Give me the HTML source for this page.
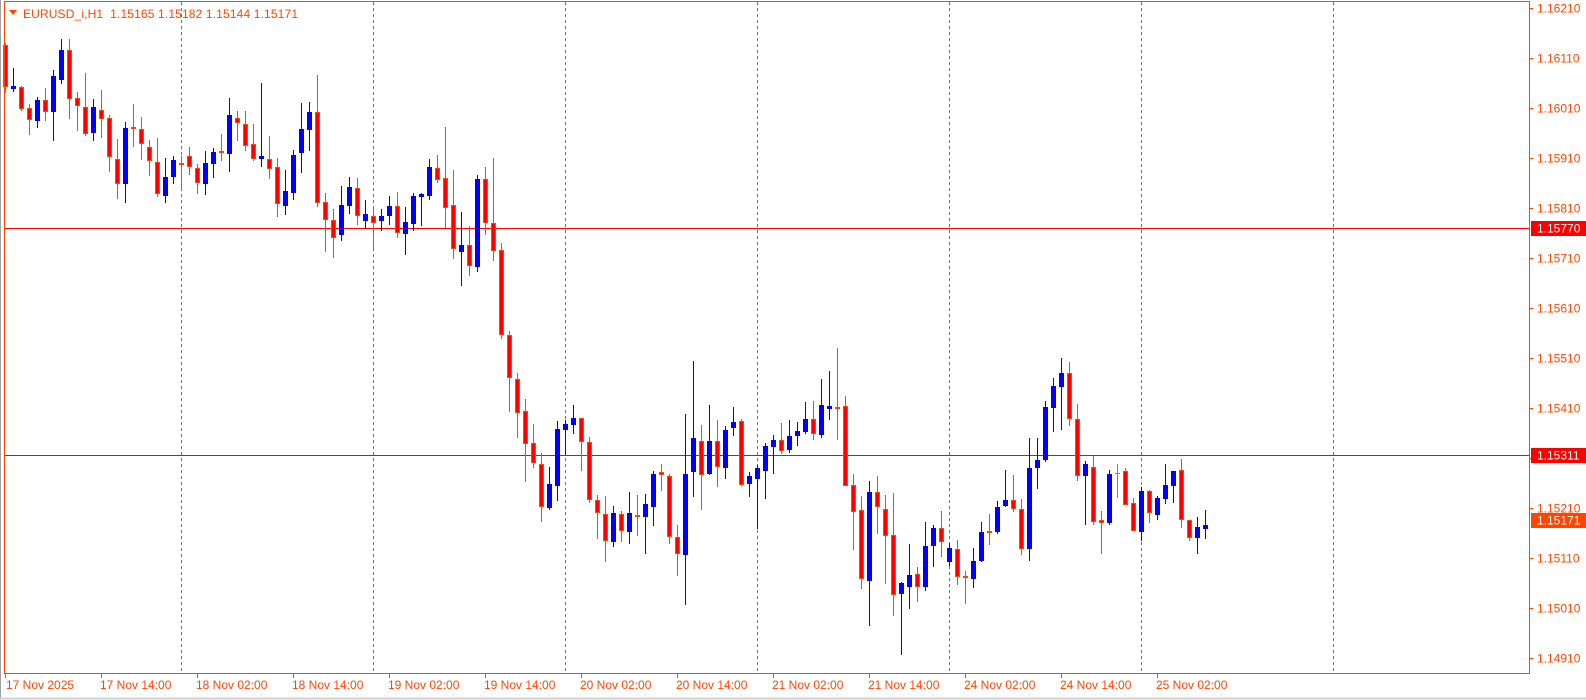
<!DOCTYPE html>
<html><head><meta charset="utf-8"><style>
html,body{margin:0;padding:0;background:#fff;width:1586px;height:700px;overflow:hidden}
svg{display:block;font-family:"Liberation Sans",sans-serif}
</style></head><body>
<svg id="c" width="1586" height="700" xmlns="http://www.w3.org/2000/svg">
<rect x="0" y="0" width="1586" height="700" fill="#fff"/>
<line x1="0.5" y1="0" x2="0.5" y2="700" stroke="#a0a0a0" stroke-width="1"/>
<line x1="0" y1="698.5" x2="1586" y2="698.5" stroke="#d0d0d0" stroke-width="2"/>
<g id="grid" stroke="#ff4500" stroke-width="1" stroke-dasharray="3,3">
<line x1="181.5" y1="2" x2="181.5" y2="673"/>
<line x1="373.5" y1="2" x2="373.5" y2="673"/>
<line x1="565.5" y1="2" x2="565.5" y2="673"/>
<line x1="757.5" y1="2" x2="757.5" y2="673"/>
<line x1="949.5" y1="2" x2="949.5" y2="673"/>
<line x1="1141.5" y1="2" x2="1141.5" y2="673"/>
<line x1="1333.5" y1="2" x2="1333.5" y2="673"/>
</g>
<line x1="5" y1="228.5" x2="1529" y2="228.5" stroke="#ff0000" stroke-width="1"/>
<line x1="5" y1="455.5" x2="1529" y2="455.5" stroke="#ff0000" stroke-width="1"/>
<g id="candles"></g>
<rect x="4.5" y="1.5" width="1525" height="672" fill="none" stroke="#ff4500" stroke-width="1"/>
<g id="ticks" stroke="#ff4500" stroke-width="1"></g>
<g fill="#ff4500" font-size="12">
<text x="1537" y="12.5">1.16210</text>
<text x="1537" y="62.5">1.16110</text>
<text x="1537" y="112.5">1.16010</text>
<text x="1537" y="162.5">1.15910</text>
<text x="1537" y="212.5">1.15810</text>
<text x="1537" y="262.5">1.15710</text>
<text x="1537" y="312.5">1.15610</text>
<text x="1537" y="362.5">1.15510</text>
<text x="1537" y="412.5">1.15410</text>
<text x="1537" y="512.5">1.15210</text>
<text x="1537" y="562.5">1.15110</text>
<text x="1537" y="612.5">1.15010</text>
<text x="1537" y="662.5">1.14910</text>
</g>
<rect x="1531" y="221" width="55" height="15" fill="#ff0000"/>
<text x="1537" y="232.5" fill="#fff" font-size="12">1.15770</text>
<rect x="1531" y="448" width="55" height="15" fill="#ff0000"/>
<text x="1537" y="459.5" fill="#fff" font-size="12">1.15311</text>
<rect x="1531" y="513" width="55" height="15" fill="#ff4500"/>
<text x="1537" y="524.5" fill="#fff" font-size="12">1.15171</text>
<g fill="#ff4500" font-size="12">
<text x="6" y="689">17 Nov 2025</text>
<text x="100" y="689">17 Nov 14:00</text>
<text x="196" y="689">18 Nov 02:00</text>
<text x="292" y="689">18 Nov 14:00</text>
<text x="388" y="689">19 Nov 02:00</text>
<text x="484" y="689">19 Nov 14:00</text>
<text x="580" y="689">20 Nov 02:00</text>
<text x="676" y="689">20 Nov 14:00</text>
<text x="772" y="689">21 Nov 02:00</text>
<text x="868" y="689">21 Nov 14:00</text>
<text x="964" y="689">24 Nov 02:00</text>
<text x="1060" y="689">24 Nov 14:00</text>
<text x="1156" y="689">25 Nov 02:00</text>
</g>
<polygon points="9,10 17,10 13,15" fill="#ff4500"/>
<text x="23" y="18" fill="#ff4500" font-size="12" textLength="275">EURUSD_i,H1 &#160;1.15165 1.15182 1.15144 1.15171</text>
</svg>
<script>
var D=[
['r',45,87,43,93],['b',86,89,68,92],['r',87,109,86,111],['r',108,120,104,135],['b',100,121,97,128],
['r',100,112,88,121],['b',76,112,70,141],['b',50,80,39,84],['r',50,99,39,119],['r',98,106,92,131],
['r',107,134,73,136],['b',107,133,99,141],['r',110,119,90,138],['r',118,157,115,172],['r',159,184,139,199],
['b',128,184,122,203],['r',127,129,104,147],['r',129,144,117,160],['r',147,161,140,176],['r',162,194,138,197],
['b',177,196,158,203],['b',160,177,156,184],['r',163,165,156,188],['r',156,167,147,175],['r',168,183,164,194],
['b',163,184,151,195],['b',152,164,148,178],['r',151,153,134,161],['b',115,154,98,172],['r',118,123,111,141],
['r',124,146,111,151],['r',144,159,124,161],['b',156,159,83,167],['r',159,169,136,179],['r',167,204,158,217],
['b',191,206,170,215],['b',155,193,150,200],['b',129,153,103,173],['b',112,130,102,151],['r',112,203,75,207],
['r',202,220,193,252],['r',220,238,209,258],['b',205,235,186,241],['b',187,206,177,214],['r',188,216,178,225],
['b',214,221,200,229],['r',216,223,206,248],['b',216,221,209,231],['b',206,216,196,225],['r',206,233,192,238],
['b',222,234,207,255],['b',196,224,193,231],['b',194,197,193,226],['b',167,196,159,200],['r',168,180,155,183],
['r',178,208,127,228],['r',205,249,170,259],['b',245,252,212,286],['r',245,266,226,276],['b',179,267,175,272],
['r',179,223,167,235],['r',223,251,158,261],['r',250,335,243,339],['r',335,378,331,412],['r',379,413,373,438],
['r',411,444,399,482],['r',443,463,424,468],['r',464,507,453,522],['b',484,508,467,510],['b',429,486,421,501],
['b',424,430,420,455],['b',418,425,405,434],['r',418,442,418,471],['r',442,500,437,503],['r',500,513,495,539],
['r',514,541,496,562],['b',513,542,506,547],['r',514,531,511,542],['b',513,532,492,544],['r',515,516,495,536],
['b',504,517,494,554],['b',474,507,471,526],['r',472,475,464,491],['r',476,537,474,544],['r',537,554,525,576],
['b',474,555,414,605],['b',438,472,361,497],['r',441,475,425,510],['b',441,474,405,475],['r',441,467,420,487],
['b',430,468,426,479],['b',422,428,407,436],['r',421,485,419,486],['b',476,484,472,497],['b',468,479,465,529],
['b',446,471,443,499],['b',440,447,435,474],['r',440,451,423,454],['b',436,450,420,453],['b',431,436,422,446],
['b',419,432,402,434],['r',419,434,401,440],['b',405,435,379,438],['b',406,409,371,420],['r',407,408,348,440],
['r',406,486,396,486],['r',485,512,474,550],['r',510,579,496,589],['b',492,581,481,626],['r',492,507,476,534],
['r',509,536,495,584],['r',535,595,493,616],['b',583,594,582,655],['b',575,587,544,609],['r',574,587,567,602],
['b',546,587,522,591],['b',528,546,525,567],['r',528,542,511,557],['b',548,562,543,566],['r',549,577,540,585],
['r',576,578,571,604],['b',561,579,548,588],['b',532,561,522,562],['r',531,532,514,545],['b',507,532,501,534],
['b',500,506,470,507],['r',500,509,475,512],['r',509,549,499,555],['b',468,549,438,561],['b',460,468,438,489],
['b',407,460,401,462],['b',386,408,378,432],['b',373,387,358,430],['r',373,419,362,426],['r',419,476,404,481],
['b',464,476,461,525],['r',467,522,456,525],['r',520,523,511,554],['b',474,523,470,525],['g',473,474,464,498],
['r',471,505,468,505],['r',503,531,498,531],['b',491,532,487,541],['r',491,513,490,523],['b',498,515,496,520],
['b',485,499,464,504],['b',471,486,471,503],['r',470,520,459,528],['r',520,538,520,541],['b',527,538,517,554],
['b',525,529,510,539]];
var g=document.getElementById('candles'),s='';
for(var k=0;k<D.length;k++){var d=D[k],L=3+8*k,cx=L+2.5,col=d[0]=='b'?'#0000ff':(d[0]=='g'?'#00e000':'#ff4500');
var t=Math.max(d[3],3);
s+='<line x1="'+cx+'" x2="'+cx+'" y1="'+t+'" y2="'+d[4]+'" stroke="'+col+'" stroke-width="1"/>';
var h=d[2]-d[1];
if(d[0]=='b'){s+='<rect x="'+L+'" y="'+d[1]+'" width="5" height="'+Math.max(h,2)+'" fill="#0000ff"/>';}
else if(d[0]=='g'){s+='<rect x="'+L+'" y="'+d[1]+'" width="5" height="1" fill="#00e000"/>';}
else{if(h<3){s+='<rect x="'+L+'" y="'+d[1]+'" width="5" height="2" fill="#ff4500"/>';}
else s+='<rect x="'+(L+0.5)+'" y="'+(d[1]+0.5)+'" width="4" height="'+(h-1)+'" fill="#ff0000" stroke="#ff4500" stroke-width="1"/>';}}
g.innerHTML=s;
var tk='';for(var p=0;p<14;p++){var y=8.5+50*p;tk+='<line x1="1529" x2="1533" y1="'+y+'" y2="'+y+'"/>';}
for(var i=0;i<13;i++){var x=5.5+96*i;tk+='<line x1="'+x+'" x2="'+x+'" y1="673" y2="678"/>';}
document.getElementById('ticks').innerHTML=tk;
</script>
</body></html>
